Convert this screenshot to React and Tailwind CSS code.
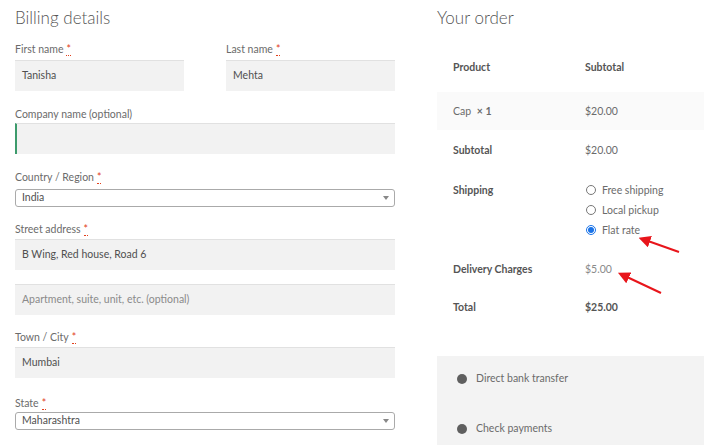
import React from "react";

const font = { fontFamily: "Lato, 'Open Sans', sans-serif" };

function Req() {
  return (
    <abbr className="ml-[3px] text-[#e2401c] no-underline border-b border-dotted border-[#e2401c] leading-none" title="required">*</abbr>
  );
}

function Label({ children, req, cls = "" }) {
  return (
    <div className={"h-[14px] flex items-center text-[10.5px] text-[#6b6b6b] " + cls}>
      <span>{children}</span>
      {req && <Req />}
    </div>
  );
}

function Input({ value, placeholder, focus, cls = "" }) {
  return (
    <div
      className={
        "h-[31px] bg-[#f2f2f2] border-t border-[#e1e1e1] flex items-center px-[7px] text-[10.5px] " +
        (focus ? "border-l-2 border-l-[#3d9b6c] " : "") +
        cls
      }
    >
      {value ? (
        <span className="text-[#4f4f4f]">{value}</span>
      ) : (
        <span className="text-[#8a8a8a]">{placeholder}</span>
      )}
    </div>
  );
}

function Select({ value, cls = "" }) {
  return (
    <div className={"h-[18px] border border-[#aaaaaa] rounded-[3px] flex items-center justify-between pl-[6px] pr-[5px] text-[10.5px] text-[#4f4f4f] bg-white " + cls}>
      <span>{value}</span>
      <span className="w-0 h-0 border-l-[3px] border-r-[3px] border-t-[4px] border-l-transparent border-r-transparent border-t-[#888]" />
    </div>
  );
}

function Radio({ checked }) {
  if (checked)
    return (
      <span className="w-[10px] h-[10px] rounded-full border border-[#1a73e8] flex items-center justify-center bg-white">
        <span className="w-[6px] h-[6px] rounded-full bg-[#1a73e8]" />
      </span>
    );
  return <span className="w-[10px] h-[10px] rounded-full border border-[#777] bg-white" />;
}

export default function App() {
  return (
    <div className="w-[704px] h-[445px] overflow-hidden bg-white relative" style={font}>
      <div className="flex">
        {/* Left column */}
        <div className="w-[380px] ml-[15px] shrink-0">
          <div className="h-[36px] pt-[6px] text-[17px] font-light text-[#555] leading-[24px]">Billing details</div>
          <div className="flex justify-between mt-[7px]">
            <div className="w-[169px]">
              <Label req cls="mb-[3px]">First name</Label>
              <Input value="Tanisha" />
            </div>
            <div className="w-[169px]">
              <Label req cls="mb-[3px]">Last name</Label>
              <Input value="Mehta" />
            </div>
          </div>
          <Label cls="mt-[17px] mb-[1px]">Company name (optional)</Label>
          <Input focus />
          <Label req cls="mt-[17px] mb-[4px]">Country / Region</Label>
          <Select value="India" />
          <Label req cls="mt-[16px] mb-[2px]">Street address</Label>
          <Input value="B Wing, Red house, Road 6" />
          <Input placeholder="Apartment, suite, unit, etc. (optional)" cls="mt-[14px]" />
          <Label req cls="mt-[16px] mb-[2px]">Town / City</Label>
          <Input value="Mumbai" />
          <Label req cls="mt-[19px] mb-[1px]">State</Label>
          <Select value="Maharashtra" />
        </div>

        {/* Right column */}
        <div className="ml-[42px] flex-1">
          <div className="h-[48px] pt-[6px] text-[17px] font-light text-[#555] leading-[24px]">Your order</div>
          <div className="text-[10.5px]">
            <div className="flex h-[44px] pt-[12px] leading-[14px]">
              <div className="w-[148px] pl-[16px] font-bold text-[#555]">Product</div>
              <div className="font-bold text-[#555]">Subtotal</div>
            </div>
            <div className="flex h-[38px] items-center bg-[#fafafa] leading-[14px]">
              <div className="w-[148px] pl-[16px] text-[#6b6b6b]">
                Cap <span className="ml-[3px] font-bold">× 1</span>
              </div>
              <div className="text-[#6b6b6b]">$20.00</div>
            </div>
            <div className="flex h-[40px] items-center leading-[14px]">
              <div className="w-[148px] pl-[16px] font-bold text-[#555]">Subtotal</div>
              <div className="text-[#6b6b6b]">$20.00</div>
            </div>
            <div className="flex pt-[10px] pb-[9px] leading-[20px]">
              <div className="w-[148px] pl-[16px] font-bold text-[#555]">Shipping</div>
              <div className="flex flex-col">
                {[
                  ["Free shipping", false],
                  ["Local pickup", false],
                  ["Flat rate", true],
                ].map(([t, c]) => (
                  <div key={t} className="flex items-center h-[20px] pl-[1px]">
                    <Radio checked={c} />
                    <span className="ml-[6px] text-[#6b6b6b]">{t}</span>
                  </div>
                ))}
              </div>
            </div>
            <div className="flex h-[39px] items-center leading-[14px]">
              <div className="w-[148px] pl-[16px] font-bold text-[#555]">Delivery Charges</div>
              <div className="text-[#8a8a8a]">$5.00</div>
            </div>
            <div className="flex h-[38px] items-center leading-[14px]">
              <div className="w-[148px] pl-[16px] font-bold text-[#555]">Total</div>
              <div className="font-bold text-[#555]">$25.00</div>
            </div>
          </div>
          <div className="mt-[30px] h-[100px] bg-[#f3f3f3] pt-[16px] text-[10.5px] text-[#6b6b6b]">
            <div className="flex items-center h-[14px] pl-[20px]">
              <span className="w-[10px] h-[10px] rounded-full bg-[#5f5f5f]" />
              <span className="ml-[9px]">Direct bank transfer</span>
            </div>
            <div className="flex items-center h-[14px] pl-[20px] mt-[36px]">
              <span className="w-[10px] h-[10px] rounded-full bg-[#5f5f5f]" />
              <span className="ml-[9px]">Check payments</span>
            </div>
          </div>
        </div>
      </div>

      {/* Annotation arrows */}
      <svg className="absolute left-0 top-0 pointer-events-none" width="704" height="445">
        <defs>
          <marker id="ah" markerWidth="6" markerHeight="6" refX="1" refY="3" orient="auto">
            <path d="M0,0 L6,3 L0,6 Z" fill="#e8151b" />
          </marker>
        </defs>
        <line x1="679" y1="252" x2="648" y2="241" stroke="#e8151b" strokeWidth="2" markerEnd="url(#ah)" />
        <line x1="661" y1="293" x2="627" y2="277" stroke="#e8151b" strokeWidth="2" markerEnd="url(#ah)" />
      </svg>
    </div>
  );
}
